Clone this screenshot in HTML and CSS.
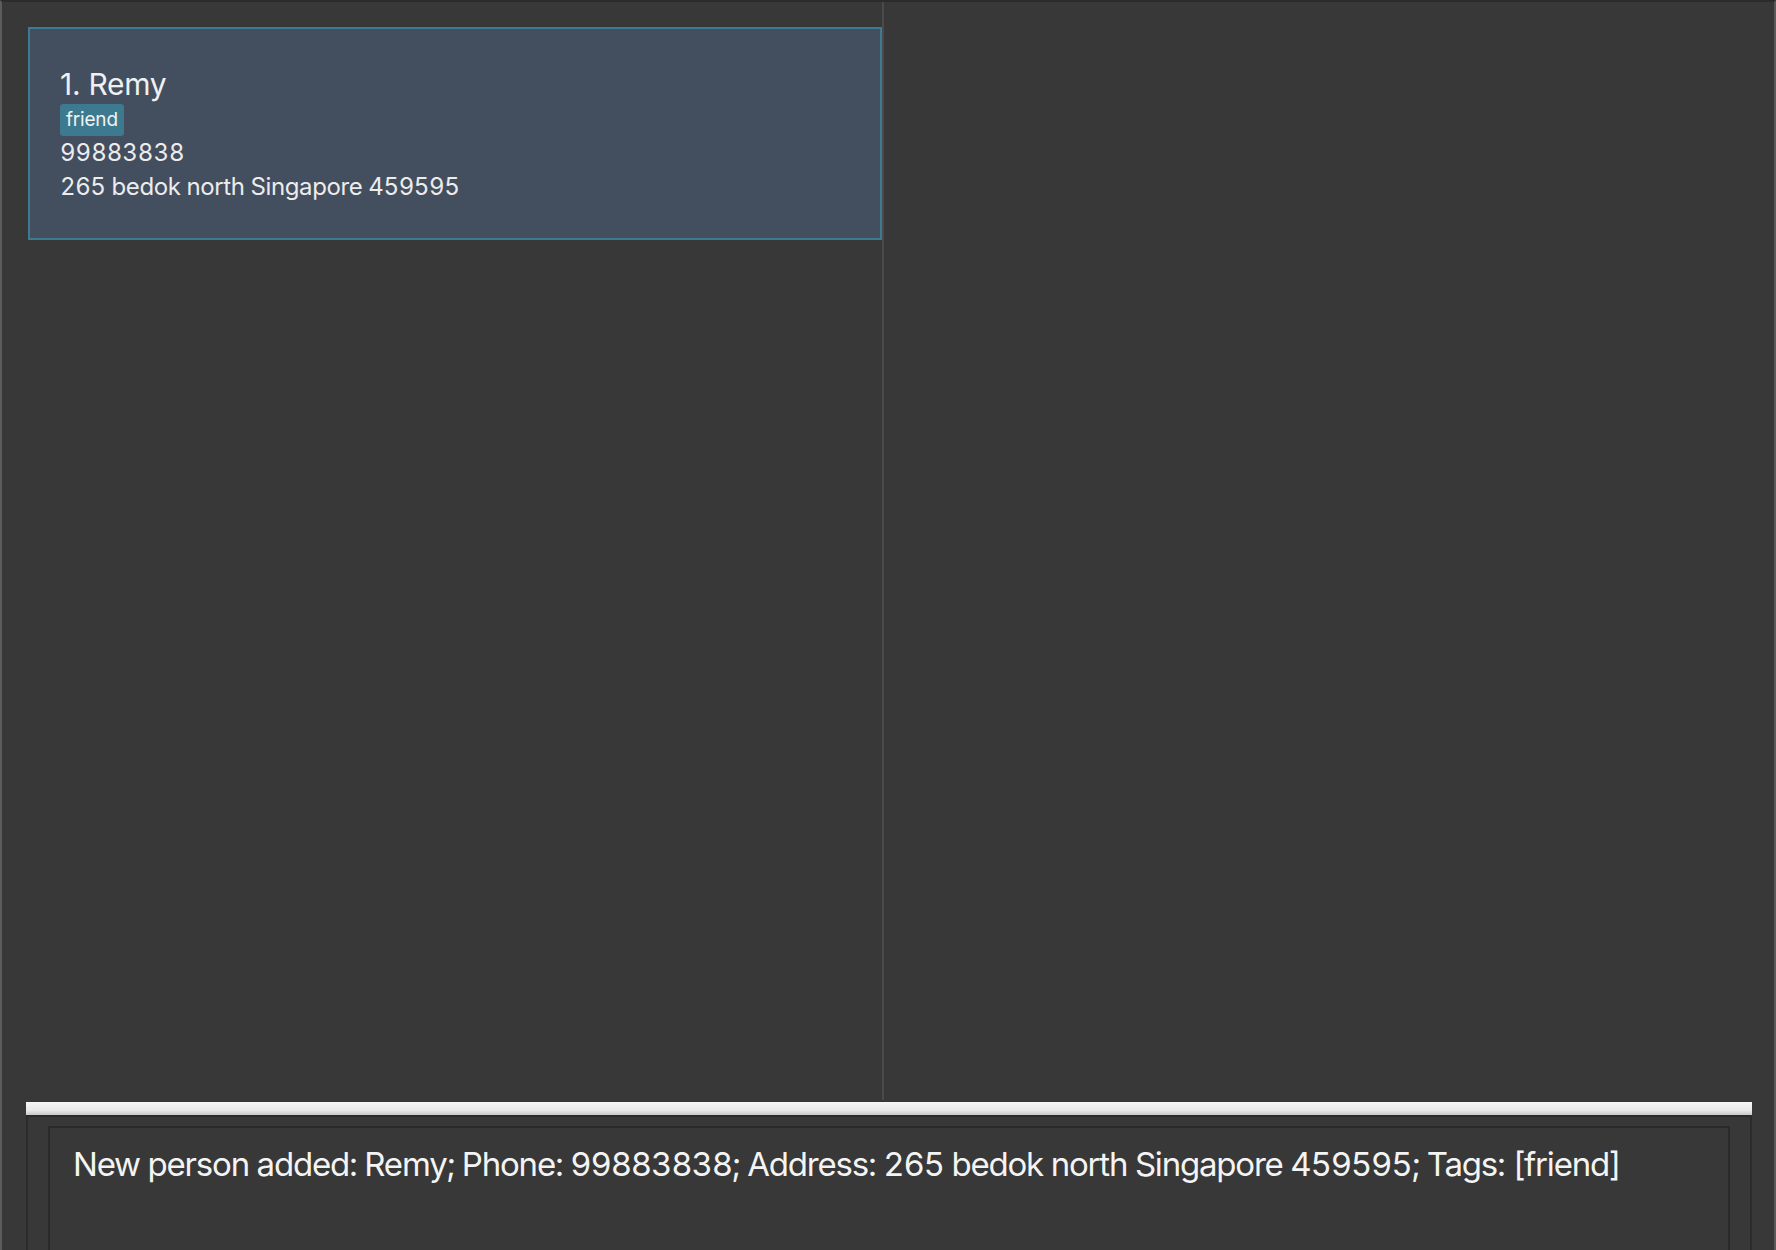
FILE: index.html
```html
<!DOCTYPE html>
<html>
<head>
<meta charset="utf-8">
<link rel="stylesheet" href="styles.css">
</head>
<body>
<div class="app">
  <div class="main">
    <div class="list-pane">
      <div class="card">
        <div class="name">1. Remy</div>
        <div class="tags"><span class="tag">friend</span></div>
        <div class="field phone">99883838</div>
        <div class="field">265 bedok north Singapore 459595</div>
      </div>
    </div>
    <div class="right-pane"></div>
  </div>
  <div class="bottom">
    <div class="bar"></div>
    <div class="result-outer">
      <div class="result-inner">New person added: Remy; Phone: 99883838; Address: 265 bedok north Singapore 459595; Tags: [friend]</div>
    </div>
  </div>
</div>
</body>
</html>
```

FILE: styles.css
```css
html, body {
  margin: 0;
  padding: 0;
  background: #383838;
}
body {
  font-family: Inter, "Noto Sans", sans-serif;
  font-variant-numeric: tabular-nums;
  color: #ececec;
}
.app {
  width: 1776px;
  height: 1250px;
  box-sizing: border-box;
  border-top: 2px solid #2b2b2b;
  border-left: 2px solid #5c5c5c;
  border-right: 2px solid #5a5a5a;
  display: flex;
  flex-direction: column;
  overflow: hidden;
}
.main {
  display: flex;
  height: 1098px;
  flex: none;
}
.list-pane {
  width: 882px;
  border-right: 2px solid #4a4a4a;
  padding: 25px 0 0 26px;
  box-sizing: border-box;
  flex: none;
}
.right-pane {
  flex: 1;
}
.card {
  background: #434e5f;
  border: 2px solid #3e7b91;
  padding: 37px 0 34px 30px;
  height: 213px;
  box-sizing: border-box;
}
.name {
  font-size: 30px;
  line-height: 36px;
  color: #f0f0f0;
  letter-spacing: -0.3px;
  font-variant-numeric: proportional-nums;
}
.tags {
  display: flex;
  margin-top: 2px;
}
.tag {
  background: #3d7a8f;
  color: #f2f2f2;
  font-size: 19px;
  line-height: 32px;
  height: 32px;
  padding: 0 6px;
  border-radius: 3px;
  letter-spacing: -0.2px;
}
.field {
  font-size: 24px;
  line-height: 34px;
  color: #ececec;
  letter-spacing: -0.4px;
}
.field.phone {
  letter-spacing: 0;
}
.bottom {
  flex: 1;
  padding: 2px 22px 0 24px;
  display: flex;
  flex-direction: column;
}
.bar {
  height: 13px;
  background: linear-gradient(#f7f7f7, #e9e9e9 65%, #c8c8c8);
  flex: none;
}
.result-outer {
  flex: 1;
  border: 2px solid #2b2b2b;
  border-bottom: none;
  padding: 9px 20px 0 20px;
  display: flex;
  flex-direction: column;
}
.result-inner {
  flex: 1;
  border: 2px solid #2a2a2a;
  border-bottom: none;
  padding: 16px 0 0 23px;
  font-size: 33px;
  line-height: 40px;
  color: #f4f4f4;
  white-space: nowrap;
  letter-spacing: -1.2px;
}
```
